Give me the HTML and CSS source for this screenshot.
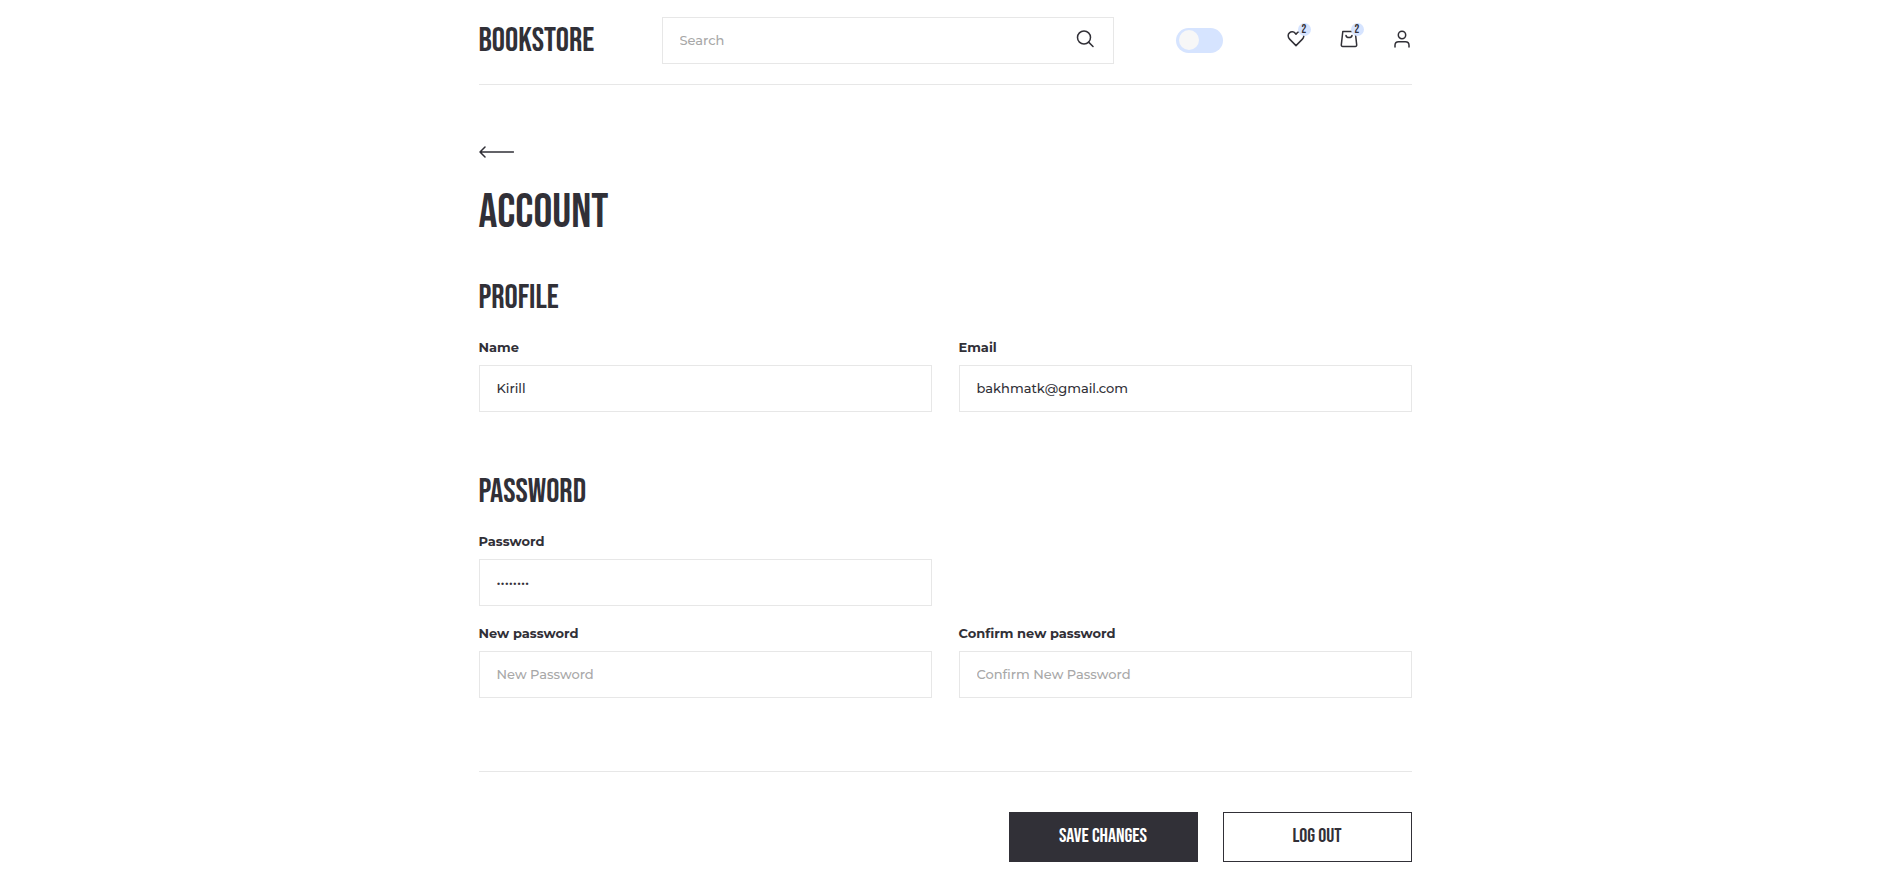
FILE: index.html
```html
<!DOCTYPE html>
<html lang="en">
<head>
  <meta charset="utf-8">
  <meta name="viewport" content="width=device-width, initial-scale=1">
  <title>Bookstore – Account</title>
  <link rel="stylesheet" href="styles.css">
</head>
<body>
  <div class="container">
    <header class="header">
      <a class="logo" href="#">BOOKSTORE</a>
      <form class="search" role="search">
        <input class="search-input" type="text" placeholder="Search" aria-label="Search">
        <button class="search-button" type="button" aria-label="Find">
          <svg class="icon" viewBox="0 0 18 18"><circle cx="8" cy="7.5" r="6.5"/><path d="M12.6 12.1 17 16.5"/></svg>
        </button>
      </form>
      <label class="switch">
        <input class="switch-input" type="checkbox" aria-label="Dark theme">
      </label>
      <nav class="actions">
        <a class="action" href="#" aria-label="Favorites">
          <svg class="icon" viewBox="0 0 18 18"><path d="M9 15.6 2.6 9.1C.7 7.2.7 4.400 2.400 2.900 4.100 1.300 6.800 1.500 8.200 3.200L9 4.200 9.800 3.200C11.200 1.500 13.900 1.300 15.600 2.900 17.300 4.400 17.300 7.200 15.400 9.100Z"/></svg>
          <span class="badge">2</span>
        </a>
        <a class="action" href="#" aria-label="Cart">
          <svg class="icon" viewBox="0 0 18 18"><path d="M2.800 1.500H15.200L16.700 14.900Q16.800 16.400 15.300 16.400H2.700Q1.200 16.400 1.300 14.900ZM6 5.500C6.600 8.300 11.400 8.300 12 5.500"/></svg>
          <span class="badge">2</span>
        </a>
        <a class="action" href="#" aria-label="Account">
          <svg class="icon" viewBox="0 0 18 18"><circle cx="9" cy="5" r="3.700"/><path d="M2 17V15.300Q2 11.700 5.600 11.700H12.400Q16 11.700 16 15.300V17"/></svg>
        </a>
      </nav>
    </header>

    <main>
      <a class="back" href="#" aria-label="Back">
        <svg class="back-icon" viewBox="0 0 35 12"><path d="M6 1 1 6 6 11M1 6H34.500"/></svg>
      </a>
      <h1 class="title">ACCOUNT</h1>

      <form class="account">
        <section class="section">
          <h2 class="subtitle">PROFILE</h2>
          <div class="fields">
            <div class="field">
              <label class="label" for="name">Name</label>
              <input class="input" id="name" type="text" value="Kirill">
            </div>
            <div class="field">
              <label class="label" for="email">Email</label>
              <input class="input" id="email" type="email" value="bakhmatk@gmail.com">
            </div>
          </div>
        </section>

        <section class="section">
          <h2 class="subtitle">PASSWORD</h2>
          <div class="fields">
            <div class="field field-first">
              <label class="label" for="password">Password</label>
              <input class="input" id="password" type="password" value="12345678">
            </div>
            <div class="field field-first">
              <label class="label" for="new-password">New password</label>
              <input class="input" id="new-password" type="password" placeholder="New Password">
            </div>
            <div class="field">
              <label class="label" for="confirm-password">Confirm new password</label>
              <input class="input" id="confirm-password" type="password" placeholder="Confirm New Password">
            </div>
          </div>
        </section>

        <div class="buttons">
          <button class="button button-primary" type="submit">SAVE CHANGES</button>
          <button class="button" type="button">LOG OUT</button>
        </div>
      </form>
    </main>
  </div>
</body>
</html>
```
FILE: styles.css
```css
:root {
  --dark: #313037;
  --line: #e7e7e7;
  --accent: #d6e4ff;
  --muted: #a8a8a8;
  --display: "Bebas Neue", "Roboto Condensed", "Liberation Sans Narrow", sans-serif;
  --text: "Montserrat", "Open Sans", sans-serif;
}

* {
  box-sizing: border-box;
}

body {
  margin: 0;
  background: #fff;
  color: var(--dark);
  font: 500 13px/20px var(--text);
}

input,
button {
  font: inherit;
  color: inherit;
}

.container {
  max-width: 933px;
  margin: 0 auto;
}

.header {
  display: flex;
  align-items: center;
  padding: 17px 0 20px;
  border-bottom: 1px solid var(--line);
}

.logo {
  flex: 0 0 183px;
  color: var(--dark);
  font: 33px/36px var(--display);
  text-decoration: none;
}

.search {
  display: flex;
  flex: 1;
  border: 1px solid var(--line);
}

.search-input {
  flex: 1;
  min-width: 0;
  height: 45px;
  padding: 0 17px 2px;
  border: 0;
  background: none;
}

.search-button {
  display: flex;
  align-items: center;
  padding: 0 19px 3px;
  border: 0;
  background: none;
}

::placeholder {
  color: var(--muted);
  opacity: 1;
}

.icon {
  display: block;
  width: 18px;
  height: 18px;
  fill: none;
  stroke: var(--dark);
  stroke-width: 1.5;
  stroke-linecap: round;
  stroke-linejoin: round;
}

.switch {
  display: flex;
  margin: 0 64px 0 62px;
}

.switch-input {
  display: flex;
  appearance: none;
  width: 47px;
  height: 25px;
  margin: 0;
  padding: 2px 3px;
  border-radius: 13px;
  background: var(--accent);
}

.switch-input::before {
  content: "";
  width: 20px;
  height: 20px;
  border-radius: 50%;
  background: #f7f7f7;
}

.switch-input:checked {
  justify-content: flex-end;
}

.actions {
  display: flex;
  gap: 35px;
  padding: 0 1px 3px 0;
}

.action {
  position: relative;
  color: var(--dark);
}

.badge {
  position: absolute;
  top: -7px;
  right: -6px;
  width: 13px;
  height: 13px;
  border-radius: 50%;
  background: var(--accent);
  font: 12px/13px var(--display);
  text-align: center;
}

.back {
  display: block;
  width: 35px;
  margin-top: 61px;
}

.back-icon {
  display: block;
  width: 35px;
  height: 12px;
  fill: none;
  stroke: var(--dark);
  stroke-width: 1.5;
  stroke-linecap: round;
  stroke-linejoin: round;
}

.title {
  margin: 27px 0 37px;
  font: 47px/56px var(--display);
}

.section {
  margin-bottom: 60px;
}

.subtitle {
  margin: 0 0 19px;
  font: 33px/40px var(--display);
}

.fields {
  display: grid;
  grid-template-columns: 1fr 1fr;
  gap: 17px 27px;
}

.field {
  display: flex;
  flex-direction: column;
  gap: 8px;
}

.field-first {
  grid-column: 1;
}

.label {
  font-weight: 700;
}

.input {
  width: 100%;
  height: 47px;
  padding: 0 17px 2px;
  border: 1px solid var(--line);
  background: #fff;
}

.buttons {
  display: flex;
  justify-content: flex-end;
  gap: 25px;
  margin-top: 73px;
  padding: 40px 0 32px;
  border-top: 1px solid var(--line);
}

.button {
  width: 189px;
  height: 50px;
  padding: 0 0 2px;
  border: 1px solid var(--dark);
  background: #fff;
  font: 20px/24px var(--display);
}

.button-primary {
  background: var(--dark);
  color: #fff;
}
```
